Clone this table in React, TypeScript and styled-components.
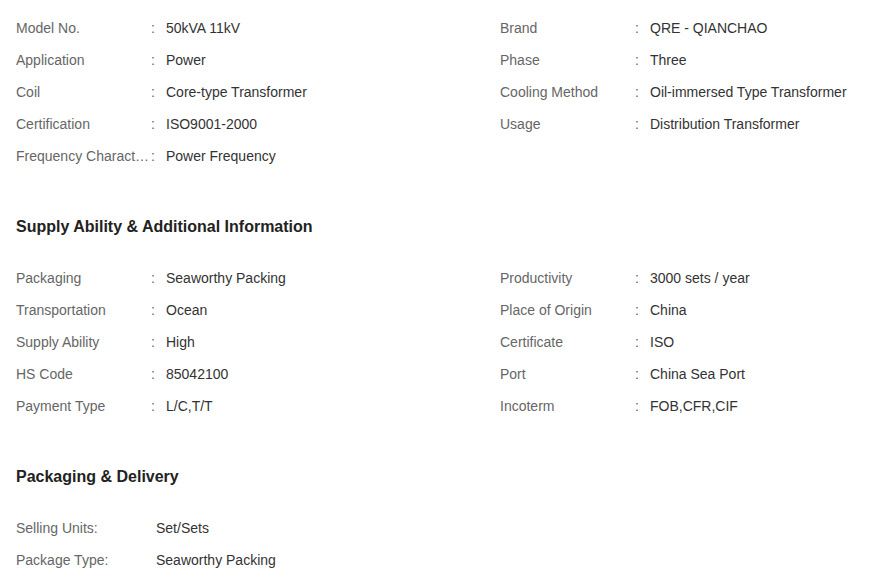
import styled, { createGlobalStyle } from 'styled-components'

const GlobalStyle = createGlobalStyle`
  body {
    margin: 0;
    background: #fff;
    font-family: "Liberation Sans", Arial, sans-serif;
  }
`

type Attr = [string, string]

const basicInfo: Attr[] = [
  ['Model No.', '50kVA 11kV'],
  ['Brand', 'QRE - QIANCHAO'],
  ['Application', 'Power'],
  ['Phase', 'Three'],
  ['Coil', 'Core-type Transformer'],
  ['Cooling Method', 'Oil-immersed Type Transformer'],
  ['Certification', 'ISO9001-2000'],
  ['Usage', 'Distribution Transformer'],
  ['Frequency Characteristic', 'Power Frequency'],
]

const supplyInfo: Attr[] = [
  ['Packaging', 'Seaworthy Packing'],
  ['Productivity', '3000 sets / year'],
  ['Transportation', 'Ocean'],
  ['Place of Origin', 'China'],
  ['Supply Ability', 'High'],
  ['Certificate', 'ISO'],
  ['HS Code', '85042100'],
  ['Port', 'China Sea Port'],
  ['Payment Type', 'L/C,T/T'],
  ['Incoterm', 'FOB,CFR,CIF'],
]

const delivery: Attr[] = [
  ['Selling Units:', 'Set/Sets'],
  ['Package Type:', 'Seaworthy Packing'],
]

function AttrGrid({ items }: { items: Attr[] }) {
  return (
    <Grid>
      {items.map(([label, value]) => (
        <Row key={label}>
          <Label title={label}>{label}</Label>
          <Colon>:</Colon>
          <Value>{value}</Value>
        </Row>
      ))}
    </Grid>
  )
}

export default function App() {
  return (
    <Page>
      <GlobalStyle />
      <AttrGrid items={basicInfo} />

      <Heading>Supply Ability &amp; Additional Information</Heading>
      <AttrGrid items={supplyInfo} />

      <Heading>Packaging &amp; Delivery</Heading>
      <List>
        {delivery.map(([label, value]) => (
          <Row key={label}>
            <PlainLabel>{label}</PlainLabel>
            <Value>{value}</Value>
          </Row>
        ))}
      </List>
    </Page>
  )
}

const Page = styled.div`
  padding: 12px 16px 8px;
  display: flex;
  flex-direction: column;
  font-size: 14px;
`

const Grid = styled.div`
  display: grid;
  grid-template-columns: 484px 372px;
`

const List = styled.div`
  display: flex;
  flex-direction: column;
`

const Row = styled.div`
  display: flex;
  align-items: center;
  height: 32px;
  line-height: 16px;
`

const Label = styled.span`
  width: 134px;
  flex: none;
  color: #666;
  white-space: nowrap;
  overflow: hidden;
  text-overflow: ellipsis;
`

const PlainLabel = styled.span`
  width: 140px;
  flex: none;
  color: #666;
`

const Colon = styled.span`
  width: 15px;
  padding-left: 1px;
  flex: none;
  color: #666;
`

const Value = styled.span`
  color: #333;
  white-space: nowrap;
`

const Heading = styled.h3`
  margin: 45px 0 25px;
  font-size: 16px;
  line-height: 20px;
  font-weight: 700;
  color: #222;
`
